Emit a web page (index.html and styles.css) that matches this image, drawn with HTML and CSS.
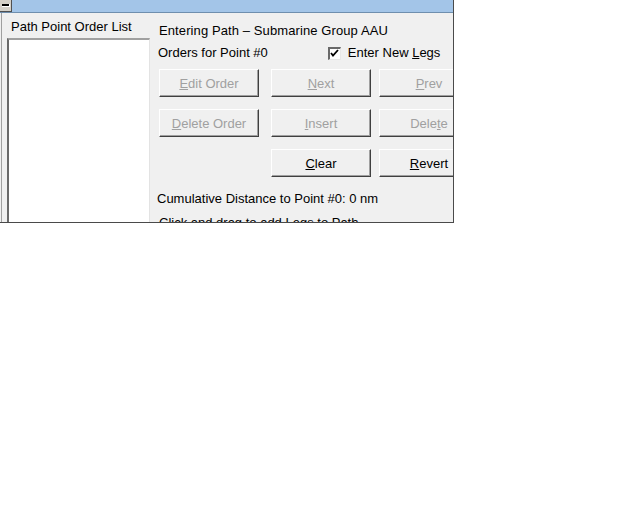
FILE: index.html
```html
<!DOCTYPE html>
<html>
<head>
<meta charset="utf-8">
<link rel="stylesheet" href="styles.css">
</head>
<body>
<div class="window">
  <div class="titlebar">
    <div class="sysbox"><span class="dash"></span></div>
  </div>
  <div class="client">
    <div class="left">
      <div class="label list-label">Path Point Order List</div>
      <div class="listbox"></div>
    </div>
    <div class="right">
      <div class="label title">Entering Path – Submarine Group AAU</div>
      <div class="row-orders">
        <div class="label">Orders for Point #0</div>
        <div class="check">
          <span class="box"><svg width="9" height="9" viewBox="0 0 9 9"><path d="M1 4 L3 6.5 L8 1" fill="none" stroke="#000" stroke-width="1.8"/></svg></span>
          <span class="label">Enter New <u>L</u>egs</span>
        </div>
      </div>
      <div class="buttons">
        <div class="btn disabled"><u>E</u>dit Order</div>
        <div class="btn disabled"><u>N</u>ext</div>
        <div class="btn disabled"><u>P</u>rev</div>
        <div class="btn disabled"><u>D</u>elete Order</div>
        <div class="btn disabled"><u>I</u>nsert</div>
        <div class="btn disabled">Dele<u>t</u>e</div>
        <div class="btn empty"></div>
        <div class="btn"><u>C</u>lear</div>
        <div class="btn"><u>R</u>evert</div>
      </div>
      <div class="label dist">Cumulative Distance to Point #0: 0 nm</div>
      <div class="label hint">Click and drag to add Legs to Path</div>
    </div>
  </div>
</div>
</body>
</html>
```
FILE: styles.css
```css
html, body {
  margin: 0;
  padding: 0;
  background: #ffffff;
}
body {
  font-family: "Liberation Sans", Arial, sans-serif;
  font-size: 13px;
  color: #000;
}
.window {
  width: 453px;
  height: 222px;
  border-right: 1px solid #4a4a4a;
  border-bottom: 1px solid #4a4a4a;
  background: #f0f0f0;
  overflow: hidden;
  display: flex;
  flex-direction: column;
}
.titlebar {
  height: 12px;
  background: #a3c5e8;
  border-bottom: 1px solid #6f8fae;
  display: flex;
  flex-shrink: 0;
}
.sysbox {
  width: 11px;
  height: 11px;
  background: #d4d0c8;
  border: 1px solid #505050;
  border-top: none;
  border-left: none;
  display: flex;
  align-items: center;
  justify-content: center;
}
.dash {
  width: 7px;
  height: 2px;
  background: #000;
  border: 1px solid #fff;
  border-left: none;
  border-top: none;
}
.client {
  flex: 1;
  display: flex;
  border-left: 1px solid #a0a0a0;
  margin-left: 1px;
  min-height: 0;
}
.left {
  width: 148px;
  box-sizing: border-box;
  display: flex;
  flex-direction: column;
  padding-left: 5px;
  flex-shrink: 0;
}
.label {
  line-height: 16px;
  white-space: nowrap;
}
.list-label {
  margin-top: 6px;
  padding-left: 4px;
}
.listbox {
  margin-top: 3px;
  flex: 1;
  background: #ffffff;
  border-top: 2px solid #a0a0a0;
  border-left: 2px solid #696969;
  border-right: 1px solid #e3e3e3;
}
.right {
  flex: 1;
  padding-left: 7px;
  display: flex;
  flex-direction: column;
  min-width: 0;
}
.title {
  margin-top: 10px;
  padding-left: 2px;
  letter-spacing: 0.1px;
}
.row-orders {
  margin-top: 6px;
  display: flex;
  align-items: center;
  padding-left: 1px;
}
.check {
  margin-left: 60px;
  display: flex;
  align-items: center;
}
.box {
  width: 10px;
  height: 10px;
  background: #fff;
  border-top: 2px solid #696969;
  border-left: 2px solid #696969;
  border-right: 1px solid #e8e8e8;
  border-bottom: 1px solid #e8e8e8;
  display: flex;
  align-items: center;
  justify-content: center;
  margin-right: 7px;
}
.buttons {
  margin-top: 8px;
  margin-left: 2px;
  display: grid;
  grid-template-columns: 112px 108px 100px;
  grid-auto-rows: 28px;
  row-gap: 12px;
}
.btn {
  width: 100px;
  height: 28px;
  box-sizing: border-box;
  display: flex;
  align-items: center;
  justify-content: center;
  background: #f0f0f0;
  border-top: 1px solid #ffffff;
  border-left: 1px solid #ffffff;
  border-right: 1px solid #404040;
  border-bottom: 1px solid #404040;
  box-shadow: inset -1px -1px 0 #a0a0a0;
  white-space: nowrap;
}
.btn.disabled {
  color: #a0a0a0;
}
.btn.empty {
  visibility: hidden;
}
.dist {
  margin-top: 14px;
}
.hint {
  margin-top: 8px;
  padding-left: 2px;
}
```
